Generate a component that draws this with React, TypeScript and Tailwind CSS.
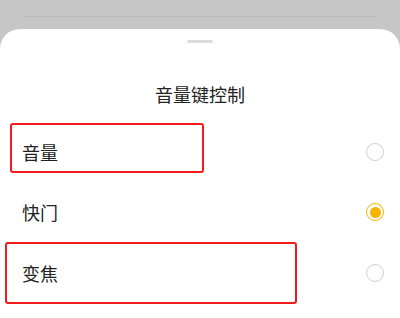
const font = { fontFamily: '"Noto Sans CJK SC", "Noto Sans", sans-serif' };

function Radio({ checked }: { checked?: boolean }) {
  if (checked) {
    return (
      <div className="flex h-[18px] w-[18px] items-center justify-center rounded-full border-[1.5px] border-[#f4b400]">
        <div className="h-[11px] w-[11px] rounded-full bg-[#f4b400]" />
      </div>
    );
  }
  return <div className="h-[18px] w-[18px] rounded-full border-[1.5px] border-[#cfcfcf]" />;
}

export default function App() {
  return (
    <div className="flex h-[318px] w-[400px] flex-col overflow-hidden bg-[#c6c6c6]" style={font}>
      <div className="h-[29px] shrink-0 px-[22px] pt-[16px]">
        <div className="h-px bg-[#b9b9b9]" />
      </div>
      <div className="flex flex-1 flex-col rounded-t-[20px] bg-white">
        <div className="flex justify-center pt-[11px]">
          <div className="h-[3px] w-[26px] rounded-full bg-[#dcdcdc]" />
        </div>
        <div className="mt-[38px] text-center text-[18px] leading-[26px] text-[#222]">音量键控制</div>
        <div className="mt-[15px] flex flex-col text-[18px] text-[#222]">
          <div className="flex h-[60px] items-start pr-[16px]">
            <div className="ml-[10px] mt-px flex h-[50px] w-[194px] items-center rounded-[3px] border-2 border-[#f21a1a] pl-[10px] pt-[8px]">
              音量
            </div>
            <div className="ml-auto mt-[21px]">
              <Radio />
            </div>
          </div>
          <div className="flex h-[60px] items-center pl-[22px] pr-[16px]">
            快门
            <div className="ml-auto">
              <Radio checked />
            </div>
          </div>
          <div className="flex h-[62px] items-center pr-[16px]">
            <div className="ml-[5px] flex h-[62px] w-[292px] items-center rounded-[3px] border-2 border-[#f21a1a] pl-[15px]">
              变焦
            </div>
            <div className="ml-auto">
              <Radio />
            </div>
          </div>
        </div>
      </div>
    </div>
  );
}
